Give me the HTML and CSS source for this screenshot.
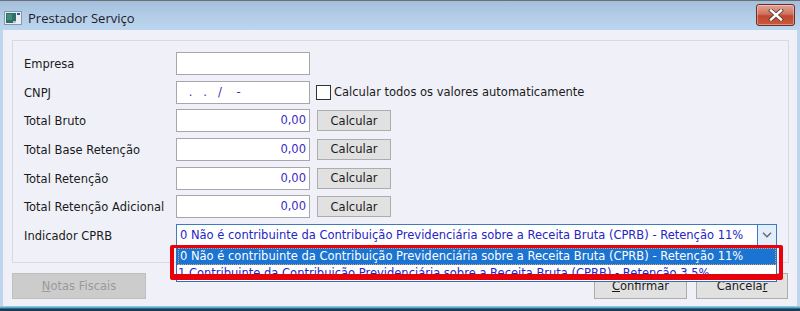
FILE: index.html
```html
<!DOCTYPE html>
<html lang="pt">
<head>
<meta charset="utf-8">
<title>Prestador Serviço</title>
<link rel="stylesheet" href="styles.css">
</head>
<body>
<div class="window">
  <div class="titlebar">
    <svg class="app-icon" width="18" height="14" viewBox="0 0 18 14">
      <rect x="0.5" y="0.5" width="17" height="13" fill="#e8eef4" stroke="#8a96a4"/>
      <rect x="2" y="2" width="10" height="10" fill="#2f6f6a"/>
      <rect x="3" y="3" width="5" height="6" fill="#3f8f7e"/>
      <rect x="13" y="2" width="3" height="2" fill="#2c55a8"/>
      <rect x="9" y="10" width="3" height="2" fill="#b8c4d0"/>
    </svg>
    <span class="title">Prestador Serviço</span>
    <div class="close-btn">
      <svg width="16" height="12" viewBox="0 0 16 12">
        <path d="M3 1.5 L13 10.5 M13 1.5 L3 10.5" stroke="#5a3a36" stroke-width="4" stroke-linecap="square"/>
        <path d="M3 1.5 L13 10.5 M13 1.5 L3 10.5" stroke="#ffffff" stroke-width="2.4" stroke-linecap="square"/>
      </svg>
    </div>
  </div>
  <div class="client">
    <div class="group">
      <div class="form">
        <label class="lbl">Empresa</label>
        <div class="field"></div>
        <div></div>

        <label class="lbl">CNPJ</label>
        <div class="field mask">&nbsp;.&nbsp;&nbsp;&nbsp;.&nbsp;&nbsp;&nbsp;/&nbsp;&nbsp;&nbsp;&nbsp;-</div>
        <div class="check-wrap"><span class="check"></span><span>Calcular todos os valores automaticamente</span></div>

        <label class="lbl">Total Bruto</label>
        <div class="field num">0,00</div>
        <div><span class="btn calc">Calcular</span></div>

        <label class="lbl">Total Base Retenção</label>
        <div class="field num">0,00</div>
        <div><span class="btn calc">Calcular</span></div>

        <label class="lbl">Total Retenção</label>
        <div class="field num">0,00</div>
        <div><span class="btn calc">Calcular</span></div>

        <label class="lbl">Total Retenção Adicional</label>
        <div class="field num">0,00</div>
        <div><span class="btn calc">Calcular</span></div>

        <label class="lbl">Indicador CPRB</label>
        <div class="combo">
          <span class="combo-text">0 Não é contribuinte da Contribuição Previdenciária sobre a Receita Bruta (CPRB) - Retenção 11%</span>
          <span class="combo-arrow">
            <svg width="10" height="6" viewBox="0 0 10 6"><path d="M1 0.8 L5 4.8 L9 0.8" fill="none" stroke="#5c6470" stroke-width="1.3"/></svg>
          </span>
          <div class="droplist">
            <div class="item selected"><span class="focus">0 Não é contribuinte da Contribuição Previdenciária sobre a Receita Bruta (CPRB) - Retenção 11%</span></div>
            <div class="item">1 Contribuinte da Contribuição Previdenciária sobre a Receita Bruta (CPRB) - Retenção 3,5%</div>
          </div>
          <div class="highlight"></div>
        </div>
      </div>
    </div>
    <div class="footer">
      <span class="btn big disabled"><u>N</u>otas Fiscais</span>
      <span class="spacer"></span>
      <span class="btn big confirm"><u>C</u>onfirmar</span>
      <span class="btn big cancel">Cancela<u>r</u></span>
    </div>
  </div>
  <div class="bottom-edge"></div>
</div>
</body>
</html>
```

FILE: styles.css
```css
* { box-sizing: border-box; }
html, body { margin: 0; padding: 0; }
body {
  width: 800px;
  height: 311px;
  overflow: hidden;
  background: #1f3a50;
  font-family: "DejaVu Sans", Verdana, sans-serif;
  font-size: 11.5px;
  color: #1a1a1a;
}
.window {
  width: 800px;
  height: 311px;
  display: flex;
  flex-direction: column;
  background: #bed5ec;
  border-top: 1px solid #6b6f74;
}
.titlebar {
  height: 29px;
  display: flex;
  align-items: center;
  padding: 0 4px 0 4px;
  background: linear-gradient(#a3bfdc, #b6cfe9 60%, #bcd5ee);
}
.app-icon { margin-top: 4px; flex: none; }
.title {
  margin-left: 6px;
  margin-top: 4px;
  font-family: "Open Sans", "Noto Sans", sans-serif;
  font-size: 13px;
  color: #1b1b2a;
}
.close-btn {
  margin-left: auto;
  margin-right: 1px;
  margin-top: -2px;
  width: 39px;
  height: 22px;
  border: 1px solid #6d2c24;
  border-radius: 3px;
  background: linear-gradient(#e2a496, #d0715e 45%, #bf4731 55%, #c95a3c);
  display: flex;
  align-items: center;
  justify-content: center;
  box-shadow: inset 0 0 0 1px rgba(255,255,255,0.35);
}
.client {
  flex: 1;
  margin: 0 3px;
  background: #f0f1f8;
  padding: 10px 8px 0 9px;
  display: flex;
  flex-direction: column;
}
.group {
  height: 223px;
  border: 1px solid #d9dadf;
  padding: 11px 0 0 11px;
}
.form {
  display: grid;
  grid-template-columns: 152px 134px 1fr;
  grid-auto-rows: 23px;
  row-gap: 5.67px;
  align-items: center;
}
.lbl {
  color: #1a1a1a;
  padding-top: 1px;
}
.field {
  height: 23px;
  border: 1px solid #a6a6ac;
  background: #fff;
  color: #3a2cc8;
  padding: 0 3px;
  line-height: 21px;
  white-space: pre;
}
.field.num { text-align: right; }
.field.mask { padding-left: 8px; color: #3a2cc8; }
.check-wrap {
  display: flex;
  align-items: center;
  padding-left: 6px;
  color: #1a1a1a;
}
.check {
  width: 15px;
  height: 15px;
  border: 1px solid #333;
  background: #fff;
  margin-right: 3px;
}
.btn {
  display: inline-flex;
  align-items: center;
  justify-content: center;
  background: #e1e1e1;
  border: 1px solid #adadad;
  color: #1a1a1a;
}
.btn.calc {
  margin-left: 7px;
  width: 74px;
  height: 21px;
}
.combo {
  grid-column: 2 / 4;
  position: relative;
  width: 601px;
  height: 23px;
  border: 1px solid #3d7bc0;
  background: #fff;
  display: flex;
  align-items: center;
}
.combo-text {
  flex: 1;
  padding-left: 3px;
  color: #2525c4;
  white-space: nowrap;
  overflow: hidden;
}
.combo-arrow {
  width: 19px;
  height: 21px;
  border-left: 1px solid #3d7bc0;
  background: #e3eefa;
  display: flex;
  align-items: center;
  justify-content: center;
}
.droplist {
  position: absolute;
  left: -1px;
  top: 22px;
  width: 601px;
  height: 35px;
  overflow: hidden;
  border: 1px solid #2f6fb8;
  background: #fff;
}
.item {
  height: 17px;
  line-height: 17px;
  padding-left: 1px;
  color: #2525c4;
  white-space: nowrap;
  overflow: hidden;
}
.item.selected {
  background: #1c74d2;
  color: #fff;
}
.item .focus {
  display: block;
  height: 17px;
  line-height: 15px;
  padding-left: 1px;
  border: 1px dotted #c9a47a;
}
.highlight {
  position: absolute;
  left: -7px;
  top: 20px;
  width: 613px;
  height: 35px;
  border: 4px solid #e8000b;
  border-top-width: 3px;
  border-bottom-width: 6px;
  border-radius: 2px;
  pointer-events: none;
}
.footer {
  display: flex;
  margin-top: 10px;
  height: 26px;
}
.btn.big { height: 26px; }
.btn.disabled {
  width: 134px;
  background: #cccccc;
  border-color: #bfbfbf;
  color: #9a9a9a;
}
.spacer { flex: 1; }
.btn.confirm { width: 93px; margin-right: 9px; }
.btn.cancel { width: 92px; margin-right: 1px; }
.bottom-edge {
  height: 5px;
  background: linear-gradient(#a9d2e6, #41a0c4 40%, #1c3a50 60%);
}
```
